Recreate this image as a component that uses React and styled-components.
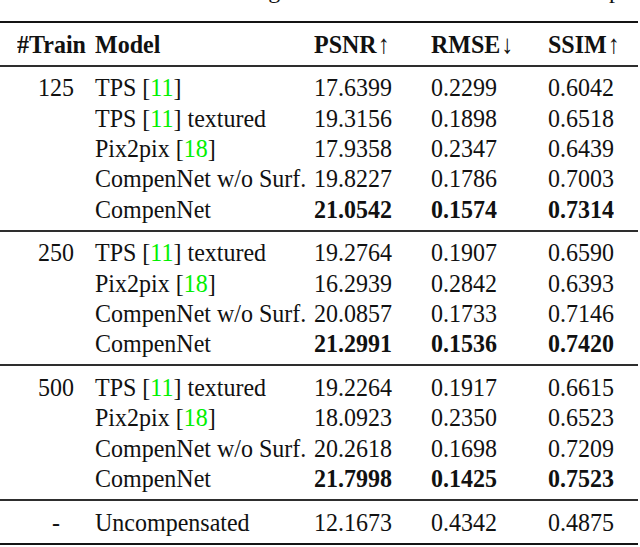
import React from "react";
import styled, { createGlobalStyle } from "styled-components";

const GlobalStyle = createGlobalStyle`
  html, body { margin: 0; padding: 0; background: #ffffff; }
  body {
    font-family: "Liberation Serif", "Times New Roman", serif;
    color: #111111;
    width: 640px;
    height: 547px;
    overflow: hidden;
  }
`;

const Page = styled.div`
  width: 638px;
  display: flex;
  flex-direction: column;
`;

const CaptionClip = styled.div`
  height: 21px;
  overflow: hidden;
`;

const CaptionLine = styled.p`
  margin: -22px 0 0 0;
  font-size: 24px;
  line-height: 24px;
  white-space: nowrap;
  word-spacing: 2.5px;
`;

const Table = styled.div`
  border-top: 2px solid #141414;
  border-bottom: 2px solid #141414;
  display: flex;
  flex-direction: column;
`;

const Group = styled.div`
  padding: 5.6px 0;
  border-top: ${(p) => (p.$first ? "none" : "2px solid #2e2e2e")};
  display: flex;
  flex-direction: column;
`;

const Row = styled.div`
  display: grid;
  grid-template-columns: 78px 219px 117px 117px 1fr;
  padding-left: 17px;
  height: 30.4px;
  align-items: center;
  font-size: 24px;
  line-height: 30.4px;
  font-weight: ${(p) => (p.$head ? 700 : 400)};
  white-space: nowrap;
  transform: scaleY(1.09);
`;

const Count = styled.span`
  text-align: ${(p) => (p.$head ? "left" : "center")};
`;

const Cell = styled.span`
  text-align: left;
  font-weight: ${(p) => (p.$bold ? 700 : "inherit")};
`;

const Cite = styled.span`
  color: #00f000;
`;

const Arrow = styled.span`
  font-weight: 400;
  margin-left: 1px;
`;

const groups = [
  {
    n: "125",
    rows: [
      { m: ["TPS [", "11", "]"], v: ["17.6399", "0.2299", "0.6042"] },
      { m: ["TPS [", "11", "] textured"], v: ["19.3156", "0.1898", "0.6518"] },
      { m: ["Pix2pix [", "18", "]"], v: ["17.9358", "0.2347", "0.6439"] },
      { m: ["CompenNet w/o Surf."], v: ["19.8227", "0.1786", "0.7003"] },
      { m: ["CompenNet"], v: ["21.0542", "0.1574", "0.7314"], best: true },
    ],
  },
  {
    n: "250",
    rows: [
      { m: ["TPS [", "11", "] textured"], v: ["19.2764", "0.1907", "0.6590"] },
      { m: ["Pix2pix [", "18", "]"], v: ["16.2939", "0.2842", "0.6393"] },
      { m: ["CompenNet w/o Surf."], v: ["20.0857", "0.1733", "0.7146"] },
      { m: ["CompenNet"], v: ["21.2991", "0.1536", "0.7420"], best: true },
    ],
  },
  {
    n: "500",
    rows: [
      { m: ["TPS [", "11", "] textured"], v: ["19.2264", "0.1917", "0.6615"] },
      { m: ["Pix2pix [", "18", "]"], v: ["18.0923", "0.2350", "0.6523"] },
      { m: ["CompenNet w/o Surf."], v: ["20.2618", "0.1698", "0.7209"] },
      { m: ["CompenNet"], v: ["21.7998", "0.1425", "0.7523"], best: true },
    ],
  },
  {
    n: "-",
    rows: [{ m: ["Uncompensated"], v: ["12.1673", "0.4342", "0.4875"] }],
  },
];

function ModelName({ parts }) {
  if (parts.length === 1) return <Cell>{parts[0]}</Cell>;
  return (
    <Cell>
      {parts[0]}
      <Cite>{parts[1]}</Cite>
      {parts[2]}
    </Cell>
  );
}

export default function App() {
  return (
    <>
      <GlobalStyle />
      <Page>
        <CaptionClip>
          <CaptionLine>Table 2: Results when using the metrics that are used to compare</CaptionLine>
        </CaptionClip>
        <Table>
          <Group $first>
            <Row $head>
              <Count $head>#Train</Count>
              <Cell>Model</Cell>
              <Cell>
                PSNR<Arrow>↑</Arrow>
              </Cell>
              <Cell>
                RMSE<Arrow>↓</Arrow>
              </Cell>
              <Cell>
                SSIM<Arrow>↑</Arrow>
              </Cell>
            </Row>
          </Group>
          {groups.map((g) => (
            <Group key={g.n}>
              {g.rows.map((r, i) => (
                <Row key={i}>
                  <Count>{i === 0 ? g.n : ""}</Count>
                  <ModelName parts={r.m} />
                  {r.v.map((v, j) => (
                    <Cell key={j} $bold={r.best}>
                      {v}
                    </Cell>
                  ))}
                </Row>
              ))}
            </Group>
          ))}
        </Table>
      </Page>
    </>
  );
}
